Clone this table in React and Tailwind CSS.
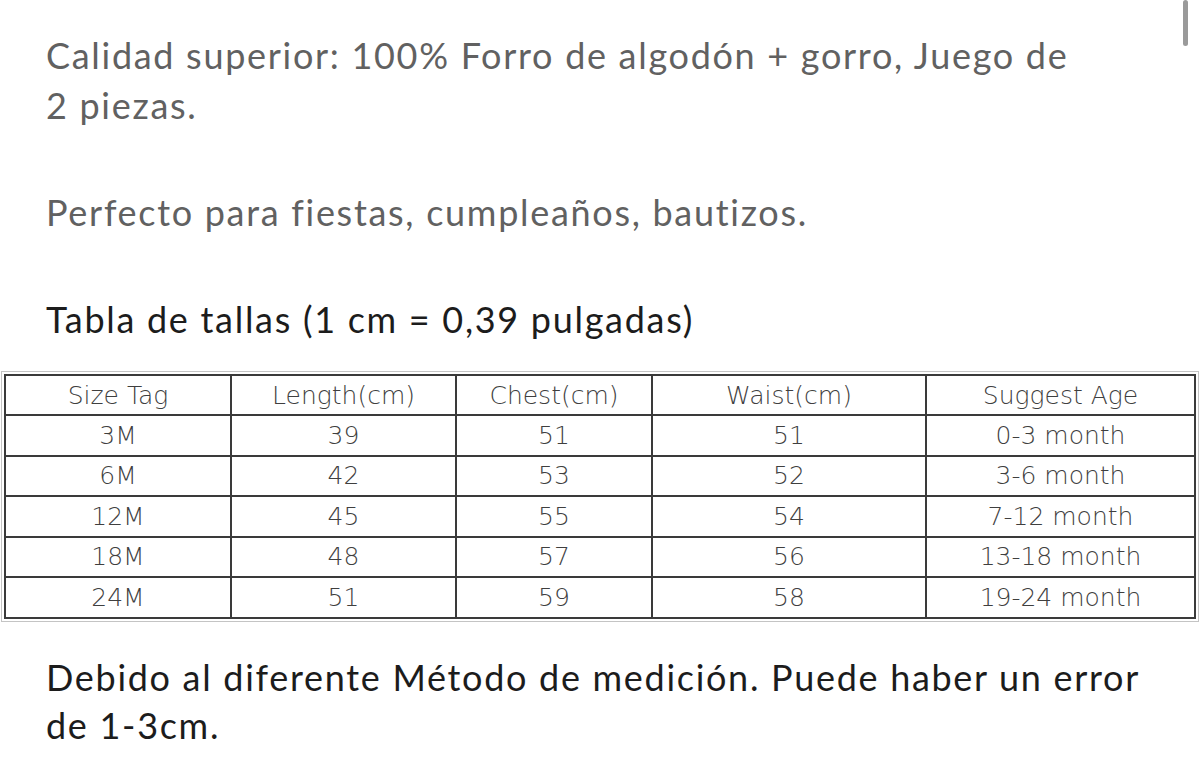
import React from 'react';

const rows = [
    ['3M', '39', '51', '51', '0-3 month'],
    ['6M', '42', '53', '52', '3-6 month'],
    ['12M', '45', '55', '54', '7-12 month'],
    ['18M', '48', '57', '56', '13-18 month'],
    ['24M', '51', '59', '58', '19-24 month'],
];

const headers = ['Size Tag', 'Length(cm)', 'Chest(cm)', 'Waist(cm)', 'Suggest Age'];
const widths = ['w-[226px]', 'w-[225px]', 'w-[196px]', 'w-[274px]', 'w-auto'];

function App() {
    return (
        <div className="relative min-h-screen bg-white font-['Lato','Noto_Sans',sans-serif] overflow-hidden">
            <div className="absolute right-[12px] top-0 h-[46px] w-[5px] rounded-full bg-[#9a9a9a]" />

            <div className="pl-[46px] pr-6 pt-[30px] tracking-[1.7px]">
                <p className="text-[36px] leading-[50px] text-[#616161]">
                    Calidad superior: 100% Forro de algodón + gorro, Juego de
                    <br />
                    2 piezas.
                </p>
                <p className="mt-[57px] text-[36px] leading-[50px] text-[#616161]">
                    Perfecto para fiestas, cumpleaños, bautizos.
                </p>
                <p className="mt-[57px] text-[36px] leading-[50px] text-[#1c1c1c]">
                    Tabla de tallas (1 cm = 0,39 pulgadas)
                </p>
            </div>

            <div className="mt-[27px] mx-[1px] border border-[#c4c4c4] p-[2px]">
                <table className="w-full border-collapse font-['DejaVu_Sans',sans-serif] font-light text-[25px] text-[#3f3f3f]">
                    <thead>
                        <tr className="h-[40px]">
                            {headers.map((h, i) => (
                                <th key={h} className={`${widths[i]} border-2 border-[#3a3a3a] font-light text-center leading-none`}>
                                    {h}
                                </th>
                            ))}
                        </tr>
                    </thead>
                    <tbody>
                        {rows.map((row) => (
                            <tr key={row[0]} className="h-[40.5px]">
                                {row.map((cell, i) => (
                                    <td key={i} className="border-2 border-[#3a3a3a] text-center leading-none">
                                        {cell}
                                    </td>
                                ))}
                            </tr>
                        ))}
                    </tbody>
                </table>
            </div>

            <div className="pl-[46px] pr-6 pt-[31px] tracking-[1.7px]">
                <p className="text-[36px] leading-[48px] text-[#1c1c1c]">
                    Debido al diferente Método de medición. Puede haber un error
                    <br />
                    de 1-3cm.
                </p>
            </div>
        </div>
    );
}

export default App;
